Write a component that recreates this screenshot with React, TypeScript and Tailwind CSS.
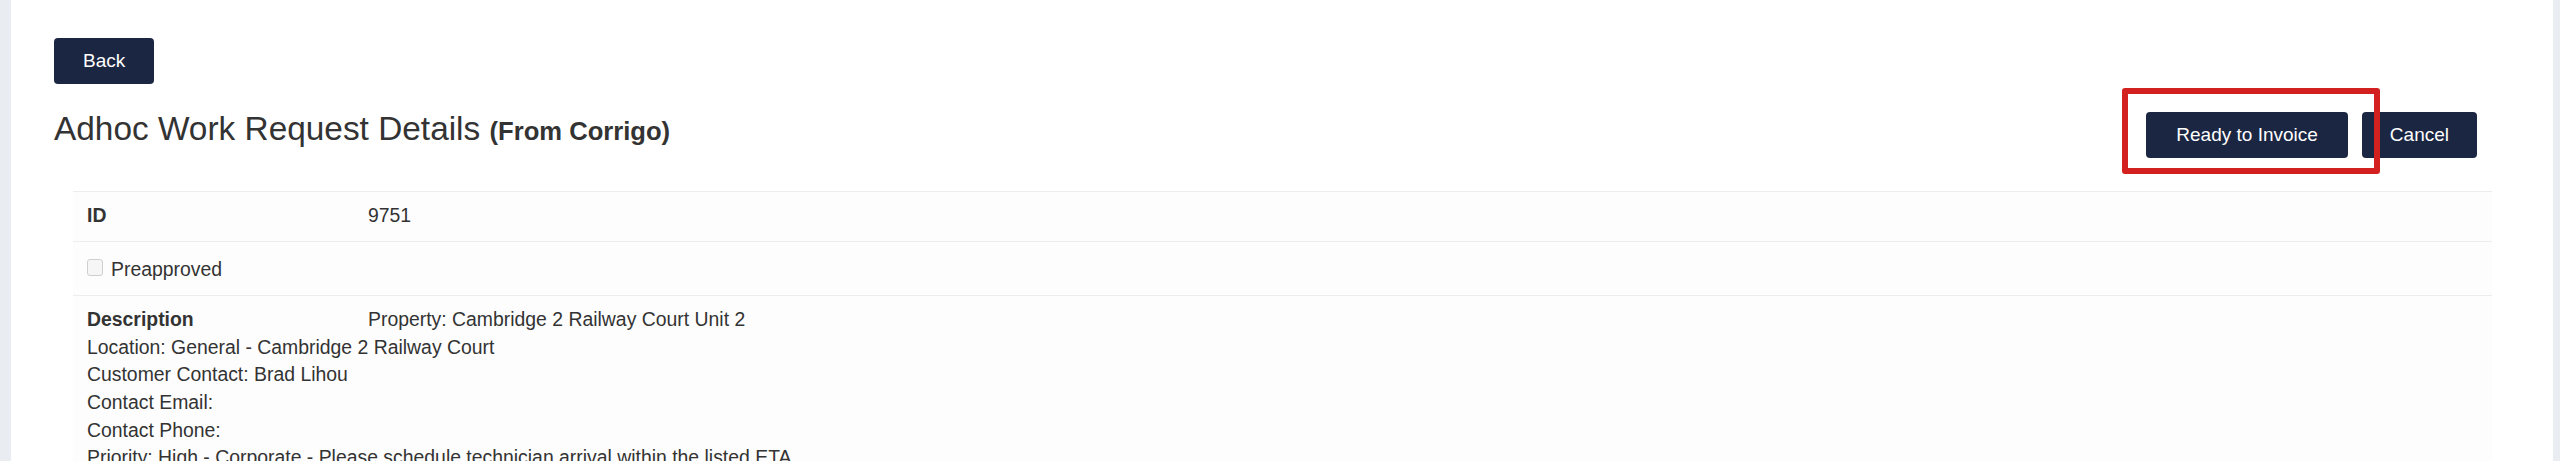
import React from "react";

export default function App() {
  const font = { fontFamily: '"Liberation Sans", Arial, Helvetica, sans-serif' };
  return (
    <div className="min-h-[461px] w-full bg-[#e9edf2] pl-[11px] pr-[7px]" style={font}>
      <div className="min-h-[461px] bg-white pl-[43px] pt-[38px] text-[#333333]">
        <button className="h-[46px] rounded-[4px] bg-[#1b2642] px-[29px] text-[19px] text-white">
          Back
        </button>

        <div className="mt-[28px] flex items-start justify-between pr-[76px]">
          <h1 className="mt-[-1px] text-[33.4px] font-normal leading-[1.1] text-[#333333]">
            Adhoc Work Request Details{" "}
            <span className="text-[25.6px] font-bold">(From Corrigo)</span>
          </h1>
          <div className="flex gap-[14px]">
            <div className="relative">
              <button className="h-[46px] rounded-[4px] bg-[#1b2642] px-[30px] text-[19px] text-white">
                Ready to Invoice
              </button>
              <div className="pointer-events-none absolute left-[-24px] top-[-24px] h-[86px] w-[258px] rounded-[3px] border-[6px] border-[#d3211f]" />
            </div>
            <button className="h-[46px] rounded-[4px] bg-[#1b2642] px-[28px] text-[19px] text-white">
              Cancel
            </button>
          </div>
        </div>

        <div className="ml-[19px] mr-[61px] mt-[33px] text-[19.4px] leading-[27.6px] text-[#333333]">
          <div className="border-t border-[#ededed] bg-[#fdfdfd] pb-[11px] pl-[14px] pt-[10px]">
            <span className="inline-block w-[281px] font-bold">ID</span>
            <span>9751</span>
          </div>
          <div className="flex items-center gap-[8px] border-t border-[#ededed] bg-[#fdfdfd] pb-[12px] pl-[14px] pt-[14px]">
            <span className="mb-[4px] inline-block h-[17px] w-[16px] rounded-[3px] border border-[#cfcfcf] bg-[#f6f6f6]" />
            <span>Preapproved</span>
          </div>
          <div className="border-t border-[#ededed] bg-[#fdfdfd] pb-[11px] pl-[14px] pt-[10px]">
            <span className="inline-block w-[281px] font-bold">Description</span>
            <span>Property: Cambridge 2 Railway Court Unit 2</span>
            <br />
            Location: General - Cambridge 2 Railway Court
            <br />
            Customer Contact: Brad Lihou
            <br />
            Contact Email:
            <br />
            Contact Phone:
            <br />
            Priority: High - Corporate - Please schedule technician arrival within the listed ETA.
          </div>
        </div>
      </div>
    </div>
  );
}
